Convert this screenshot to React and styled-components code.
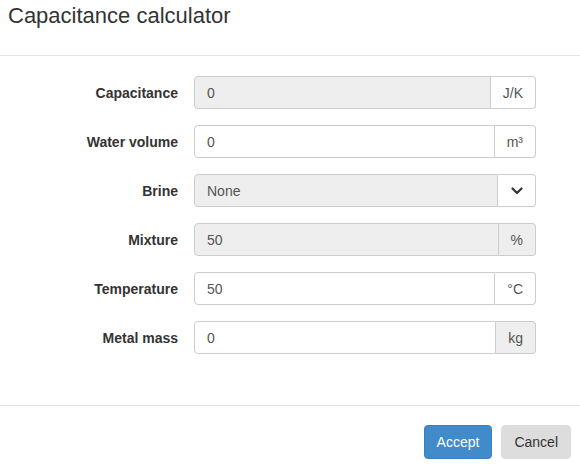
import React from "react";
import styled, { createGlobalStyle } from "styled-components";

const GlobalStyle = createGlobalStyle`
  html, body {
    margin: 0;
    padding: 0;
    background: #fff;
  }
  body {
    font-family: "Liberation Sans", Arial, sans-serif;
    font-size: 14px;
    color: #333;
  }
  * {
    box-sizing: border-box;
  }
`;

const fields = [
  { label: "Capacitance", value: "0", unit: "J/K", disabled: true },
  { label: "Water volume", value: "0", unit: "m³" },
  { label: "Brine", value: "None", select: true, disabled: true },
  { label: "Mixture", value: "50", unit: "%", disabled: true, grayUnit: true },
  { label: "Temperature", value: "50", unit: "°C" },
  { label: "Metal mass", value: "0", unit: "kg", grayUnit: true },
];

const ChevronDown = () => (
  <svg width="12" height="8" viewBox="0 0 12 8" fill="none">
    <path
      d="M1.5 1.5 L6 6 L10.5 1.5"
      stroke="#333"
      strokeWidth="2.2"
      strokeLinecap="round"
      strokeLinejoin="round"
    />
  </svg>
);

const App = () => {
  return (
    <>
      <GlobalStyle />
      <Modal>
        <Header>
          <Title>Capacitance calculator</Title>
        </Header>
        <Body>
          {fields.map((f) => (
            <FormRow key={f.label}>
              <Label>{f.label}</Label>
              <InputGroup>
                <Field $disabled={f.disabled}>{f.value}</Field>
                {f.select ? (
                  <DropButton>
                    <ChevronDown />
                  </DropButton>
                ) : (
                  <Addon $gray={f.grayUnit}>{f.unit}</Addon>
                )}
              </InputGroup>
            </FormRow>
          ))}
        </Body>
        <Footer>
          <Button $primary>Accept</Button>
          <Button>Cancel</Button>
        </Footer>
      </Modal>
    </>
  );
};

export default App;

const Modal = styled.div`
  width: 580px;
  height: 465px;
  display: flex;
  flex-direction: column;
  background: #fff;
`;

const Header = styled.div`
  height: 56px;
  padding: 0 8px;
  border-bottom: 1px solid #e5e5e5;
`;

const Title = styled.h4`
  margin: 0;
  font-size: 22px;
  font-weight: 400;
  line-height: 32px;
  color: #333;
`;

const Body = styled.div`
  display: flex;
  flex-direction: column;
  gap: 16px;
  padding: 20px 44px 51px 0;
  border-bottom: 1px solid #e5e5e5;
`;

const FormRow = styled.div`
  display: grid;
  grid-template-columns: 178px 1fr;
  column-gap: 16px;
  align-items: center;
`;

const Label = styled.label`
  text-align: right;
  font-weight: 700;
  font-size: 14px;
  color: #333;
`;

const InputGroup = styled.div`
  display: flex;
  height: 33px;
`;

const Field = styled.div`
  flex: 1;
  display: flex;
  align-items: center;
  padding: 0 12px;
  border: 1px solid #ccc;
  border-radius: 4px 0 0 4px;
  background: ${(p) => (p.$disabled ? "#eee" : "#fff")};
  color: #555;
  font-size: 14px;
`;

const Addon = styled.span`
  display: flex;
  align-items: center;
  justify-content: center;
  padding: 0 12px;
  border: 1px solid #ccc;
  border-left: 0;
  border-radius: 0 4px 4px 0;
  background: ${(p) => (p.$gray ? "#eee" : "#fff")};
  color: #555;
  font-size: 14px;
`;

const DropButton = styled.span`
  width: 38px;
  display: flex;
  align-items: center;
  justify-content: center;
  border: 1px solid #ccc;
  border-left: 0;
  border-radius: 0 4px 4px 0;
  background: #fff;
`;

const Footer = styled.div`
  display: flex;
  justify-content: flex-end;
  gap: 9px;
  padding: 19px 9px 0 0;
`;

const Button = styled.button`
  height: 34px;
  padding: 0 12px;
  font-family: "Liberation Sans", Arial, sans-serif;
  font-size: 14px;
  border-radius: 4px;
  border: 1px solid ${(p) => (p.$primary ? "#3a80c2" : "#ddd")};
  background: ${(p) => (p.$primary ? "#428bca" : "#ddd")};
  color: ${(p) => (p.$primary ? "#fff" : "#333")};
  &:hover {
    cursor: pointer;
  }
`;
